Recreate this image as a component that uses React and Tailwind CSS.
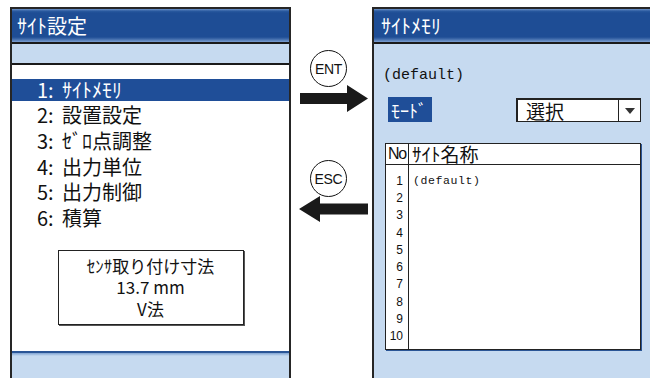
import React from "react";

const jp = 'font-["Noto_Sans_CJK_JP",sans-serif]';

function TitleBar({ text, pl }) {
  return (
    <div
      className={`h-[33px] flex items-center ${pl} text-white text-[20px] leading-[24px] ${jp} bg-[linear-gradient(to_bottom,#6f95c9_0px,#2a5aa0_2px,#1e4d95_4px,#1e4d95_28px,#3d69aa_30px,#7d9fd0_33px)]`}
    >
      {text}
    </div>
  );
}

function ArrowRight() {
  return (
    <svg width="68" height="27" viewBox="0 0 68 27" className="block">
      <polygon points="0,8 47,8 47,0 68,13.5 47,27 47,19 0,19" fill="#1a1a1a" />
    </svg>
  );
}

function ArrowLeft() {
  return (
    <svg width="69" height="26" viewBox="0 0 69 26" className="block">
      <polygon points="69,7.5 21,7.5 21,0 0,13 21,26 21,18.5 69,18.5" fill="#1a1a1a" />
    </svg>
  );
}

function Circle({ label }) {
  return (
    <div className="w-[37px] h-[37px] rounded-full border-[1.5px] border-[#111] bg-white flex items-center justify-center text-[14px] leading-[16px] text-[#111] font-['Liberation_Sans',Arial,sans-serif] tracking-[-0.3px]">
      {label}
    </div>
  );
}

const menu = [
  ["1:", "ｻｲﾄﾒﾓﾘ"],
  ["2:", "設置設定"],
  ["3:", "ｾﾞﾛ点調整"],
  ["4:", "出力単位"],
  ["5:", "出力制御"],
  ["6:", "積算"],
];

export default function App() {
  return (
    <div className="w-[650px] h-[378px] bg-white overflow-hidden flex">
      {/* Left panel */}
      <div className="ml-[10px] mt-[7px] w-[281px] h-[371px] border-x-2 border-t-2 border-[#262626] flex flex-col shrink-0">
        <TitleBar text="ｻｲﾄ設定" pl="pl-[5px]" />
        <div className="h-[2px] bg-[#1a1a1a]" />
        <div className="h-[19px] bg-[#c6daf0]" />
        <div className="h-[2px] bg-[#1a1a1a]" />
        <div className="h-[286px] bg-white flex flex-col pt-[12px]">
          {menu.map(([n, t], i) => (
            <div key={i} className="h-[25.6px] flex items-center">
              <div
                className={`w-full h-[22px] flex items-center pl-[25px] text-[20px] leading-[22px] ${jp} ${
                  i === 0 ? "bg-[#1f4e98] text-white" : "text-[#111]"
                }`}
              >
                <span className="inline-block w-[25px]">{n}</span>
                <span>{t}</span>
              </div>
            </div>
          ))}
          <div className="mt-[19px] mx-auto w-[186px] h-[75px] border border-[#222] shadow-[1px_1px_0_#555] flex flex-col items-center justify-center text-[#111] text-[17px] leading-[21.5px]">
            <div className={`h-[21.5px] ${jp}`}>ｾﾝｻ取り付け寸法</div>
            <div className={`h-[21.5px] ${jp}`}>13.7 mm</div>
            <div className={`h-[21.5px] ${jp}`}>V法</div>
          </div>
        </div>
        <div className="h-[2px] bg-[#2a5596]" />
        <div className="flex-1 bg-[linear-gradient(to_bottom,#7fa3d2_0px,#c6daf0_3px,#c6daf0_100%)]" />
      </div>

      {/* Middle arrows */}
      <div className="w-[81px] shrink-0 flex flex-col">
        <div className="mt-[50px] ml-[19px]">
          <Circle label="ENT" />
        </div>
        <div className="mt-[-2px] ml-[9px]">
          <ArrowRight />
        </div>
        <div className="mt-[48px] ml-[19px]">
          <Circle label="ESC" />
        </div>
        <div className="mt-[-1px] ml-[8px]">
          <ArrowLeft />
        </div>
      </div>

      {/* Right panel */}
      <div className="mt-[7px] flex-1 h-[371px] border-l-2 border-t-2 border-[#262626] flex flex-col">
        <TitleBar text="ｻｲﾄﾒﾓﾘ" pl="pl-[7px]" />
        <div className="h-[2px] bg-[#1a1a1a]" />
        <div className="flex-1 bg-[#c6daf0] flex flex-col pl-[9px]">
          <div className="mt-[23px] h-[18px] leading-[18px] text-[15px] text-[#111] font-['Liberation_Mono','DejaVu_Sans_Mono',monospace]">
            (default)
          </div>
          <div className="mt-[12px] flex items-start">
            <div className={`ml-[5px] w-[44px] h-[25px] bg-[#1f4e98] text-white text-[18px] leading-[22px] flex items-center pl-[3px] ${jp}`}>
              ﾓｰﾄﾞ
            </div>
            <div className="ml-[84px] mt-[1px] w-[125px] h-[24px] bg-white border border-[#222] border-l-2 border-t-2 flex">
              <div className={`flex-1 flex items-center pl-[8px] text-[19px] leading-[21px] text-[#111] ${jp}`}>
                選択
              </div>
              <div className="w-[22px] border-l border-[#222] flex items-center justify-center">
                <svg width="10" height="6" viewBox="0 0 10 6">
                  <polygon points="0,0 10,0 5,6" fill="#333" />
                </svg>
              </div>
            </div>
          </div>
          <div className="mt-[21px] ml-[2px] w-[256px] h-[207px] bg-white border-[1.5px] border-[#222] shadow-[1px_1px_0_#2a5596] flex flex-col">
            <div className="h-[21px] flex border-b border-[#222]">
              <div className="w-[23px] border-r border-[#222] flex items-center justify-center text-[16px] leading-[18px] text-[#111] font-['Liberation_Sans',sans-serif] tracking-[-1.2px]">
                No
              </div>
              <div className={`flex-1 flex items-center pl-[3px] text-[19px] leading-[20px] text-[#111] ${jp}`}>
                ｻｲﾄ名称
              </div>
            </div>
            <div className="flex-1 flex">
              <div className="w-[23px] border-r border-[#222] pt-[7px] flex flex-col">
                {[1, 2, 3, 4, 5, 6, 7, 8, 9, 10].map((n) => (
                  <div
                    key={n}
                    className="h-[17.3px] flex items-center justify-end pr-[5px] text-[12px] leading-[14px] text-[#111] font-['Liberation_Sans',sans-serif]"
                  >
                    {n}
                  </div>
                ))}
              </div>
              <div className="flex-1 pt-[7px] pl-[4px]">
                <div className="h-[17.3px] flex items-center text-[11.5px] leading-[14px] text-[#111] font-['Liberation_Mono',monospace] tracking-[0.6px]">
                  (default)
                </div>
              </div>
            </div>
          </div>
        </div>
      </div>
    </div>
  );
}
